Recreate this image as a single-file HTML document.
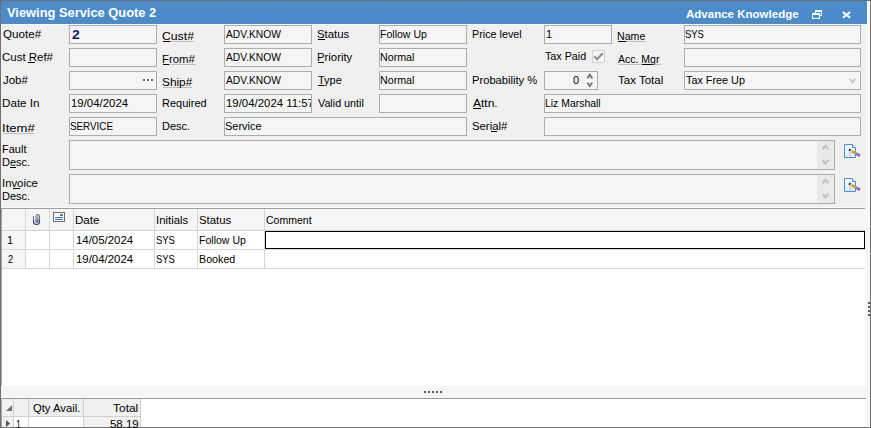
<!DOCTYPE html>
<html><head><meta charset="utf-8"><style>
html,body{margin:0;padding:0;width:871px;height:428px;overflow:hidden;background:#f0f0f0}
.r{position:absolute}
.t{position:absolute;white-space:pre;font-family:"Liberation Sans", sans-serif;line-height:20px;transform-origin:0 0}
</style></head><body>
<div class="r" style="left:0px;top:0px;width:871px;height:428px;background:#f0f0f0"></div>
<div class="r" style="left:1px;top:1px;width:866px;height:23px;background:#4b8bca"></div>
<div class="r" style="left:1px;top:24px;width:869px;height:1px;background:#fafafa"></div>
<div class="r" style="left:867px;top:1px;width:3px;height:427px;background:#f8f8f8"></div>
<div class="r" style="left:815px;top:10px;width:7px;height:6px;box-sizing:border-box;border:1px solid #fff;border-top-width:2px;"></div>
<div class="r" style="left:812px;top:13px;width:8px;height:6px;box-sizing:border-box;border:1px solid #fff;border-top-width:2px;background:#4b8bca"></div>
<svg class="r" style="left:841px;top:10px" width="11" height="10" viewBox="0 0 11 10"><path d="M1.9 1.9 L9.1 7.8 M9.1 1.9 L1.9 7.8" stroke="#fff" stroke-width="2"/></svg>
<div class="r" style="left:69px;top:25px;width:88px;height:19px;background:#f5f5f5;box-sizing:border-box;border:1px solid #acacac;"></div>
<div class="r" style="left:163px;top:41px;width:31px;height:1px;background:#bdbdbd"></div>
<div class="r" style="left:163px;top:41px;width:7px;height:1px;background:#000"></div>
<div class="r" style="left:224px;top:25px;width:88px;height:19px;background:#f5f5f5;box-sizing:border-box;border:1px solid #acacac;"></div>
<div class="r" style="left:318px;top:39px;width:7px;height:1px;background:#000"></div>
<div class="r" style="left:379px;top:25px;width:88px;height:19px;background:#f5f5f5;box-sizing:border-box;border:1px solid #acacac;"></div>
<div class="r" style="left:544px;top:25px;width:68px;height:19px;background:#f5f5f5;box-sizing:border-box;border:1px solid #acacac;"></div>
<div class="r" style="left:618px;top:41px;width:28px;height:1px;background:#bdbdbd"></div>
<div class="r" style="left:618px;top:41px;width:8px;height:1px;background:#000"></div>
<div class="r" style="left:684px;top:25px;width:177px;height:19px;background:#f5f5f5;box-sizing:border-box;border:1px solid #acacac;"></div>
<div class="r" style="left:28px;top:62px;width:7px;height:1px;background:#000"></div>
<div class="r" style="left:69px;top:48px;width:88px;height:19px;background:#f5f5f5;box-sizing:border-box;border:1px solid #acacac;"></div>
<div class="r" style="left:163px;top:64px;width:33px;height:1px;background:#bdbdbd"></div>
<div class="r" style="left:163px;top:64px;width:6px;height:1px;background:#000"></div>
<div class="r" style="left:224px;top:48px;width:88px;height:19px;background:#f5f5f5;box-sizing:border-box;border:1px solid #acacac;"></div>
<div class="r" style="left:318px;top:62px;width:6px;height:1px;background:#000"></div>
<div class="r" style="left:379px;top:48px;width:88px;height:19px;background:#f5f5f5;box-sizing:border-box;border:1px solid #acacac;"></div>
<div class="r" style="left:592px;top:50px;width:13px;height:13px;box-sizing:border-box;border:1px solid #d6d0d6;background:#f5f5f5"></div>
<svg class="r" style="left:592px;top:50px" width="13" height="13" viewBox="0 0 13 13"><path d="M2.3 6.3 L5 9.2 L10.8 3.2" fill="none" stroke="#8e8e8e" stroke-width="2"/></svg>
<div class="r" style="left:618px;top:64px;width:43px;height:1px;background:#bdbdbd"></div>
<div class="r" style="left:642px;top:64px;width:9px;height:1px;background:#000"></div>
<div class="r" style="left:684px;top:48px;width:177px;height:19px;background:#f5f5f5;box-sizing:border-box;border:1px solid #acacac;"></div>
<div class="r" style="left:69px;top:71px;width:88px;height:19px;background:#f5f5f5;box-sizing:border-box;border:1px solid #acacac;"></div>
<div class="r" style="left:143px;top:79px;width:2px;height:2px;background:#6a6a6a"></div>
<div class="r" style="left:147px;top:79px;width:2px;height:2px;background:#6a6a6a"></div>
<div class="r" style="left:151px;top:79px;width:2px;height:2px;background:#6a6a6a"></div>
<div class="r" style="left:163px;top:87px;width:29px;height:1px;background:#bdbdbd"></div>
<div class="r" style="left:224px;top:71px;width:88px;height:19px;background:#f5f5f5;box-sizing:border-box;border:1px solid #acacac;"></div>
<div class="r" style="left:318px;top:85px;width:6px;height:1px;background:#000"></div>
<div class="r" style="left:379px;top:71px;width:88px;height:19px;background:#f5f5f5;box-sizing:border-box;border:1px solid #acacac;"></div>
<div class="r" style="left:544px;top:71px;width:54px;height:19px;background:#f5f5f5;box-sizing:border-box;border:1px solid #acacac;"></div>
<svg class="r" style="left:585px;top:72px" width="10" height="17" viewBox="0 0 10 17"><path d="M2.3 6.3 L4.8 2.8 L7.3 6.3 M2.3 10.5 L4.8 14 L7.3 10.5" fill="none" stroke="#7a7a7a" stroke-width="2"/></svg>
<div class="r" style="left:684px;top:71px;width:177px;height:19px;background:#f5f5f5;box-sizing:border-box;border:1px solid #acacac;"></div>
<svg class="r" style="left:846px;top:74px" width="13" height="12" viewBox="0 0 13 12"><path d="M3.5 4.5 L6.5 8.5 L9.5 4.5" fill="none" stroke="#c4c4c4" stroke-width="1.8"/></svg>
<div class="r" style="left:69px;top:94px;width:88px;height:19px;background:#f5f5f5;box-sizing:border-box;border:1px solid #acacac;"></div>
<div class="r" style="left:224px;top:94px;width:88px;height:19px;background:#f5f5f5;box-sizing:border-box;border:1px solid #acacac;"></div>
<div class="r" style="left:379px;top:94px;width:88px;height:19px;background:#f5f5f5;box-sizing:border-box;border:1px solid #acacac;"></div>
<div class="r" style="left:473px;top:108px;width:8px;height:1px;background:#000"></div>
<div class="r" style="left:544px;top:94px;width:317px;height:19px;background:#f5f5f5;box-sizing:border-box;border:1px solid #acacac;"></div>
<div class="r" style="left:3px;top:133px;width:31px;height:1px;background:#bdbdbd"></div>
<div class="r" style="left:69px;top:117px;width:88px;height:19px;background:#f5f5f5;box-sizing:border-box;border:1px solid #acacac;"></div>
<div class="r" style="left:224px;top:117px;width:243px;height:19px;background:#f5f5f5;box-sizing:border-box;border:1px solid #acacac;"></div>
<div class="r" style="left:491px;top:131px;width:6px;height:1px;background:#000"></div>
<div class="r" style="left:544px;top:117px;width:317px;height:19px;background:#f5f5f5;box-sizing:border-box;border:1px solid #acacac;"></div>
<div class="r" style="left:10px;top:167px;width:6px;height:1px;background:#000"></div>
<div class="r" style="left:69px;top:140px;width:766px;height:30px;background:#f5f5f5;box-sizing:border-box;border:1px solid #acacac;"></div>
<div class="r" style="left:817px;top:141px;width:17px;height:28px;background:#e9e9e9"></div>
<div class="r" style="left:13px;top:188px;width:7px;height:1px;background:#000"></div>
<div class="r" style="left:69px;top:174px;width:766px;height:30px;background:#f5f5f5;box-sizing:border-box;border:1px solid #acacac;"></div>
<div class="r" style="left:817px;top:175px;width:17px;height:28px;background:#e9e9e9"></div>
<svg class="r" style="left:817px;top:140px" width="17" height="30" viewBox="0 0 17 30"><path d="M5.6 9.3 L8.5 5.8 L11.4 9.3 M5.6 20 L8.5 23.5 L11.4 20" fill="none" stroke="#c4c4c4" stroke-width="2.3"/></svg>
<svg class="r" style="left:817px;top:174px" width="17" height="30" viewBox="0 0 17 30"><path d="M5.6 9.3 L8.5 5.8 L11.4 9.3 M5.6 20 L8.5 23.5 L11.4 20" fill="none" stroke="#c4c4c4" stroke-width="2.3"/></svg>
<svg class="r" style="left:842px;top:142px" width="20" height="18" viewBox="0 0 20 18">
<defs><linearGradient id="dg142" x1="0" y1="0" x2="0" y2="1"><stop offset="0" stop-color="#ffffff"/><stop offset="1" stop-color="#d6f2f8"/></linearGradient></defs>
<path d="M2.5 2.5 H10.5 L13.5 5.5 V15.5 H2.5 Z" fill="url(#dg142)" stroke="#3f8ee0" stroke-width="1"/>
<path d="M10.5 2.5 V5.5 H13.5" fill="#ffffff" stroke="#3f8ee0" stroke-width="1"/>
<path d="M7.8 9.2 L8.8 14.8" stroke="#d0d0d6" stroke-width="2"/>
<path d="M9.5 8.9 L14 11.5" stroke="#e09838" stroke-width="2.8"/>
<path d="M8.3 8.2 L9.7 9.0" stroke="#eadfcc" stroke-width="2.4"/>
<path d="M7.0 7.5 L8.5 8.3" stroke="#1a1a1a" stroke-width="2"/>
<path d="M13.9 11.45 L15 12.1" stroke="#4a8ee0" stroke-width="2.4"/>
<path d="M14.9 12.05 L18 13.8" stroke="#a65cbf" stroke-width="2.8"/>
</svg>
<svg class="r" style="left:842px;top:176px" width="20" height="18" viewBox="0 0 20 18">
<defs><linearGradient id="dg176" x1="0" y1="0" x2="0" y2="1"><stop offset="0" stop-color="#ffffff"/><stop offset="1" stop-color="#d6f2f8"/></linearGradient></defs>
<path d="M2.5 2.5 H10.5 L13.5 5.5 V15.5 H2.5 Z" fill="url(#dg176)" stroke="#3f8ee0" stroke-width="1"/>
<path d="M10.5 2.5 V5.5 H13.5" fill="#ffffff" stroke="#3f8ee0" stroke-width="1"/>
<path d="M7.8 9.2 L8.8 14.8" stroke="#d0d0d6" stroke-width="2"/>
<path d="M9.5 8.9 L14 11.5" stroke="#e09838" stroke-width="2.8"/>
<path d="M8.3 8.2 L9.7 9.0" stroke="#eadfcc" stroke-width="2.4"/>
<path d="M7.0 7.5 L8.5 8.3" stroke="#1a1a1a" stroke-width="2"/>
<path d="M13.9 11.45 L15 12.1" stroke="#4a8ee0" stroke-width="2.4"/>
<path d="M14.9 12.05 L18 13.8" stroke="#a65cbf" stroke-width="2.8"/>
</svg>
<div class="r" style="left:1px;top:207px;width:865px;height:1px;background:#fcfcfc"></div>
<div class="r" style="left:1px;top:208px;width:864px;height:1px;background:#a0a0a0"></div>
<div class="r" style="left:1px;top:209px;width:865px;height:177px;background:#fff"></div>
<div class="r" style="left:1px;top:209px;width:864px;height:21px;background:#f5f5f5"></div>
<div class="r" style="left:1px;top:230px;width:864px;height:1px;background:#d2d2d2"></div>
<div class="r" style="left:1px;top:231px;width:24px;height:37px;background:#f5f5f5"></div>
<div class="r" style="left:1px;top:249px;width:864px;height:1px;background:#d9d9d9"></div>
<div class="r" style="left:1px;top:268px;width:864px;height:1px;background:#d9d9d9"></div>
<div class="r" style="left:25px;top:209px;width:1px;height:60px;background:#d6d6d6"></div>
<div class="r" style="left:49px;top:209px;width:1px;height:60px;background:#d6d6d6"></div>
<div class="r" style="left:73px;top:209px;width:1px;height:60px;background:#d6d6d6"></div>
<div class="r" style="left:154px;top:209px;width:1px;height:60px;background:#d6d6d6"></div>
<div class="r" style="left:197px;top:209px;width:1px;height:60px;background:#d6d6d6"></div>
<div class="r" style="left:264px;top:209px;width:1px;height:60px;background:#d6d6d6"></div>
<svg class="r" style="left:31px;top:212px" width="12" height="15" viewBox="0 0 12 15"><defs><linearGradient id="pc" x1="0" y1="0" x2="0" y2="1"><stop offset="0" stop-color="#7a7a86"/><stop offset="0.45" stop-color="#7a7a86"/><stop offset="0.6" stop-color="#2c3f86"/><stop offset="1" stop-color="#2c3f86"/></linearGradient></defs><path d="M2.5 4 V9.5 A3 3 0 0 0 8.5 9.5 V4.3 A1.75 1.75 0 0 0 5 4.3 V9.2 A0.9 0.9 0 0 0 6.8 9.2 V4.2" fill="none" stroke="url(#pc)" stroke-width="1.15"/></svg>
<svg class="r" style="left:53px;top:212px" width="13" height="11" viewBox="0 0 13 11"><rect x="0.5" y="0.5" width="11" height="9" fill="#fff" stroke="#6c6c6c" stroke-width="1"/><rect x="7" y="2" width="3" height="2" fill="#6b7b6b"/><path d="M2 5.5 H10 M2 7.5 H10" stroke="#3a78d0" stroke-width="1"/></svg>
<div class="r" style="left:265px;top:231px;width:600px;height:18px;box-sizing:border-box;border:1px solid #000"></div>
<div class="r" style="left:1px;top:208px;width:1px;height:178px;background:#a8a8a8"></div>
<div class="r" style="left:1px;top:386px;width:869px;height:12px;background:#f5f5f5"></div>
<div class="r" style="left:1px;top:398px;width:865px;height:1px;background:#9c9c9c"></div>
<div class="r" style="left:424px;top:391px;width:2px;height:2px;background:#5a5a5a"></div>
<div class="r" style="left:428px;top:391px;width:2px;height:2px;background:#5a5a5a"></div>
<div class="r" style="left:432px;top:391px;width:2px;height:2px;background:#5a5a5a"></div>
<div class="r" style="left:436px;top:391px;width:2px;height:2px;background:#5a5a5a"></div>
<div class="r" style="left:440px;top:391px;width:2px;height:2px;background:#5a5a5a"></div>
<div class="r" style="left:868px;top:302px;width:2px;height:2px;background:#5a5a5a"></div>
<div class="r" style="left:868px;top:306px;width:2px;height:2px;background:#5a5a5a"></div>
<div class="r" style="left:868px;top:310px;width:2px;height:2px;background:#5a5a5a"></div>
<div class="r" style="left:868px;top:314px;width:2px;height:2px;background:#5a5a5a"></div>
<div class="r" style="left:1px;top:399px;width:865px;height:28px;background:#fff"></div>
<div class="r" style="left:1px;top:399px;width:139px;height:17px;background:#f0f0f0"></div>
<div class="r" style="left:1px;top:417px;width:12px;height:10px;background:#f0f0f0"></div>
<div class="r" style="left:84px;top:417px;width:56px;height:10px;background:#f2f2f2"></div>
<div class="r" style="left:1px;top:416px;width:140px;height:1px;background:#d0d0d0"></div>
<div class="r" style="left:13px;top:399px;width:1px;height:28px;background:#d0d0d0"></div>
<div class="r" style="left:28px;top:399px;width:1px;height:28px;background:#d0d0d0"></div>
<div class="r" style="left:83px;top:399px;width:1px;height:28px;background:#d0d0d0"></div>
<div class="r" style="left:140px;top:399px;width:1px;height:28px;background:#d0d0d0"></div>
<svg class="r" style="left:5px;top:404px" width="8" height="8" viewBox="0 0 8 8"><path d="M7 1 V7 H1 Z" fill="#707070"/></svg>
<svg class="r" style="left:5px;top:419px" width="6" height="9" viewBox="0 0 6 9"><path d="M1 1 L5 4.5 L1 8 Z" fill="#555"/></svg>
<div class="r" style="left:1px;top:398px;width:1px;height:29px;background:#a8a8a8"></div>
<div class="r" style="left:0px;top:0px;width:871px;height:1px;background:#707070"></div>
<div class="r" style="left:0px;top:0px;width:1px;height:428px;background:#707070"></div>
<div class="r" style="left:870px;top:0px;width:1px;height:428px;background:#707070"></div>
<div class="r" style="left:0px;top:427px;width:871px;height:1px;background:#707070"></div>
<div class="t" style="left:7.00px;top:3px;font-size:12px;font-weight:700;color:#fff;transform:scaleX(1.0719);">Viewing Service Quote 2</div>
<div class="t" style="left:686.00px;top:4px;font-size:11px;font-weight:700;color:#fff;transform:scaleX(1.0467);">Advance Knowledge</div>
<div class="t" style="left:3.00px;top:24px;font-size:11px;font-weight:400;color:#000;transform:scaleX(1.0556);">Quote#</div>
<div class="t" style="left:72.00px;top:25px;font-size:12px;font-weight:700;color:#15156b;transform:scaleX(1.1667);">2</div>
<div class="t" style="left:161.89px;top:26px;font-size:11px;font-weight:400;color:#000;transform:scaleX(1.1111);">Cust#</div>
<div class="t" style="left:226.00px;top:24px;font-size:11px;font-weight:400;color:#000;transform:scaleX(0.9322);">ADV.KNOW</div>
<div class="t" style="left:316.97px;top:24px;font-size:11px;font-weight:400;color:#000;transform:scaleX(1.0333);">Status</div>
<div class="t" style="left:380.04px;top:24px;font-size:11px;font-weight:400;color:#000;transform:scaleX(0.9583);">Follow Up</div>
<div class="t" style="left:472.02px;top:24px;font-size:11px;font-weight:400;color:#000;transform:scaleX(0.9796);">Price level</div>
<div class="t" style="left:546.00px;top:24px;font-size:11px;font-weight:400;color:#000;">1</div>
<div class="t" style="left:617.04px;top:26px;font-size:11px;font-weight:400;color:#000;transform:scaleX(0.9643);">Name</div>
<div class="t" style="left:685.14px;top:24px;font-size:11px;font-weight:400;color:#000;transform:scaleX(0.8571);">SYS</div>
<div class="t" style="left:1.96px;top:47px;font-size:11px;font-weight:400;color:#000;transform:scaleX(1.0417);">Cust Ref#</div>
<div class="t" style="left:161.97px;top:49px;font-size:11px;font-weight:400;color:#000;transform:scaleX(1.0323);">From#</div>
<div class="t" style="left:226.00px;top:47px;font-size:11px;font-weight:400;color:#000;transform:scaleX(0.9322);">ADV.KNOW</div>
<div class="t" style="left:316.97px;top:47px;font-size:11px;font-weight:400;color:#000;transform:scaleX(1.0303);">Priority</div>
<div class="t" style="left:380.03px;top:47px;font-size:11px;font-weight:400;color:#000;transform:scaleX(0.9706);">Normal</div>
<div class="t" style="left:545.00px;top:46px;font-size:11px;font-weight:400;color:#000;transform:scaleX(0.9762);">Tax Paid</div>
<div class="t" style="left:618.00px;top:49px;font-size:11px;font-weight:400;color:#000;transform:scaleX(0.9535);">Acc. Mgr</div>
<div class="t" style="left:3.00px;top:70px;font-size:11px;font-weight:400;color:#000;transform:scaleX(1.0417);">Job#</div>
<div class="t" style="left:161.93px;top:72px;font-size:11px;font-weight:400;color:#000;transform:scaleX(1.0741);">Ship#</div>
<div class="t" style="left:226.00px;top:70px;font-size:11px;font-weight:400;color:#000;transform:scaleX(0.9322);">ADV.KNOW</div>
<div class="t" style="left:318.00px;top:70px;font-size:11px;font-weight:400;color:#000;">Type</div>
<div class="t" style="left:380.03px;top:70px;font-size:11px;font-weight:400;color:#000;transform:scaleX(0.9706);">Normal</div>
<div class="t" style="left:471.98px;top:70px;font-size:11px;font-weight:400;color:#000;transform:scaleX(1.0159);">Probability %</div>
<div class="t" style="left:573.00px;top:70px;font-size:11px;font-weight:400;color:#000;">0</div>
<div class="t" style="left:618.00px;top:70px;font-size:11px;font-weight:400;color:#000;transform:scaleX(1.0465);">Tax Total</div>
<div class="t" style="left:686.00px;top:70px;font-size:11px;font-weight:400;color:#000;transform:scaleX(0.9833);">Tax Free Up</div>
<div class="t" style="left:1.94px;top:93px;font-size:11px;font-weight:400;color:#000;transform:scaleX(1.0588);">Date In</div>
<div class="t" style="left:70.96px;top:93px;font-size:11px;font-weight:400;color:#000;transform:scaleX(1.0370);">19/04/2024</div>
<div class="t" style="left:162.00px;top:93px;font-size:11px;font-weight:400;color:#000;">Required</div>
<div class="r" style="left:225px;top:88px;width:86px;height:30px;overflow:hidden"><div class="t" style="left:225.96px;top:93px;font-size:11px;font-weight:400;color:#000;transform:scaleX(1.0370);left:0.96px;top:5px">19/04/2024 11:57</div></div>
<div class="t" style="left:318.00px;top:93px;font-size:11px;font-weight:400;color:#000;transform:scaleX(0.9783);">Valid until</div>
<div class="t" style="left:473.00px;top:93px;font-size:11px;font-weight:400;color:#000;transform:scaleX(1.0909);">Attn.</div>
<div class="t" style="left:545.05px;top:93px;font-size:11px;font-weight:400;color:#000;transform:scaleX(0.9474);">Liz Marshall</div>
<div class="t" style="left:1.81px;top:118px;font-size:11px;font-weight:400;color:#000;transform:scaleX(1.1923);">Item#</div>
<div class="t" style="left:70.11px;top:116px;font-size:11px;font-weight:400;color:#000;transform:scaleX(0.8936);">SERVICE</div>
<div class="t" style="left:162.00px;top:116px;font-size:11px;font-weight:400;color:#000;">Desc.</div>
<div class="t" style="left:225.00px;top:116px;font-size:11px;font-weight:400;color:#000;">Service</div>
<div class="t" style="left:471.97px;top:116px;font-size:11px;font-weight:400;color:#000;transform:scaleX(1.0303);">Serial#</div>
<div class="t" style="left:2.00px;top:139px;font-size:11px;font-weight:400;color:#000;">Fault</div>
<div class="t" style="left:2.00px;top:152px;font-size:11px;font-weight:400;color:#000;">Desc.</div>
<div class="t" style="left:1.97px;top:173px;font-size:11px;font-weight:400;color:#000;transform:scaleX(1.0294);">Invoice</div>
<div class="t" style="left:2.00px;top:186px;font-size:11px;font-weight:400;color:#000;">Desc.</div>
<div class="t" style="left:74.95px;top:210px;font-size:11px;font-weight:400;color:#000;transform:scaleX(1.0455);">Date</div>
<div class="t" style="left:155.97px;top:210px;font-size:11px;font-weight:400;color:#000;transform:scaleX(1.0333);">Initials</div>
<div class="t" style="left:198.97px;top:210px;font-size:11px;font-weight:400;color:#000;transform:scaleX(1.0333);">Status</div>
<div class="t" style="left:266.04px;top:210px;font-size:11px;font-weight:400;color:#000;transform:scaleX(0.9574);">Comment</div>
<div class="t" style="left:7.00px;top:230px;font-size:11px;font-weight:400;color:#000;">1</div>
<div class="t" style="left:75.96px;top:230px;font-size:11px;font-weight:400;color:#000;transform:scaleX(1.0370);">14/05/2024</div>
<div class="t" style="left:156.14px;top:230px;font-size:11px;font-weight:400;color:#000;transform:scaleX(0.8571);">SYS</div>
<div class="t" style="left:199.04px;top:230px;font-size:11px;font-weight:400;color:#000;transform:scaleX(0.9583);">Follow Up</div>
<div class="t" style="left:8.00px;top:249px;font-size:11px;font-weight:400;color:#000;transform:scaleX(0.8333);">2</div>
<div class="t" style="left:75.96px;top:249px;font-size:11px;font-weight:400;color:#000;transform:scaleX(1.0370);">19/04/2024</div>
<div class="t" style="left:156.14px;top:249px;font-size:11px;font-weight:400;color:#000;transform:scaleX(0.8571);">SYS</div>
<div class="t" style="left:199.03px;top:249px;font-size:11px;font-weight:400;color:#000;transform:scaleX(0.9722);">Booked</div>
<div class="t" style="left:33.00px;top:398px;font-size:11px;font-weight:400;color:#000;transform:scaleX(1.0217);">Qty Avail.</div>
<div class="t" style="left:113.00px;top:398px;font-size:11px;font-weight:400;color:#000;transform:scaleX(1.0870);">Total</div>
<div class="t" style="left:16.20px;top:414px;font-size:11px;font-weight:400;color:#000;transform:scaleX(0.8000);">1</div>
<div class="t" style="left:109.96px;top:414px;font-size:11px;font-weight:400;color:#000;transform:scaleX(1.0385);">58.19</div>
</body></html>
